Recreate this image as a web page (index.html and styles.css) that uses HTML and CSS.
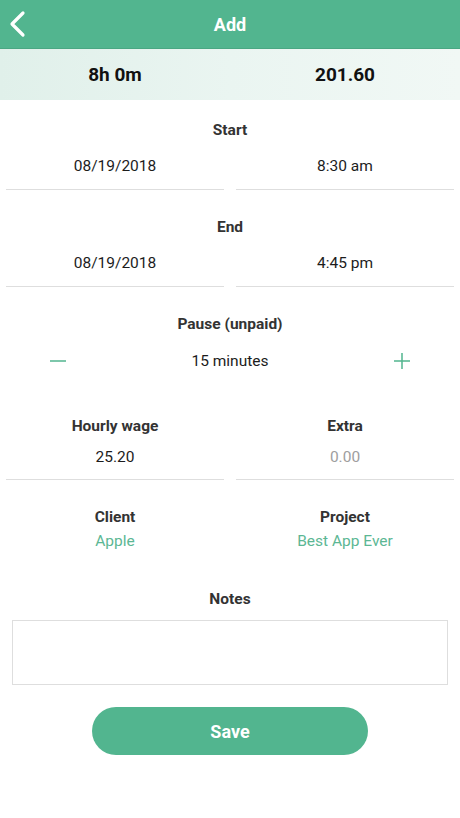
FILE: index.html
```
<!DOCTYPE html>
<html lang="en">
<head>
    <meta charset="UTF-8">
    <meta name="viewport" content="width=device-width, initial-scale=1.0">
    <title>Add</title>
    <link rel="stylesheet" href="styles.css">
</head>
<body>
    <div class="appbar">
        <span class="back">
            <svg width="18" height="28" viewBox="0 0 18 28"><path d="M15 3 L4 14 L15 25" fill="none" stroke="#fff" stroke-width="3.2" stroke-linecap="round" stroke-linejoin="round"/></svg>
        </span>
        <span class="appbar-title">Add</span>
    </div>
    <div class="summary">
        <div class="summary-value">8h 0m</div>
        <div class="summary-value">201.60</div>
    </div>

    <div class="form">
        <div class="section first">
            <div class="label">Start</div>
            <div class="pair">
                <div class="field">08/19/2018</div>
                <div class="field">8:30 am</div>
            </div>
        </div>
        <div class="section">
            <div class="label">End</div>
            <div class="pair">
                <div class="field">08/19/2018</div>
                <div class="field">4:45 pm</div>
            </div>
        </div>
        <div class="section">
            <div class="label">Pause (unpaid)</div>
            <div class="stepper">
                <span class="step">
                    <svg width="18" height="18" viewBox="0 0 18 18"><path d="M1 9 H17" stroke="#52b58f" stroke-width="1.5"/></svg>
                </span>
                <span class="step-value">15 minutes</span>
                <span class="step">
                    <svg width="18" height="18" viewBox="0 0 18 18"><path d="M1 9 H17 M9 1 V17" stroke="#52b58f" stroke-width="1.5"/></svg>
                </span>
            </div>
        </div>
        <div class="pair wage-row">
            <div>
                <div class="label small-gap">Hourly wage</div>
                <div class="field short">25.20</div>
            </div>
            <div>
                <div class="label small-gap">Extra</div>
                <div class="field short placeholder">0.00</div>
            </div>
        </div>
        <div class="pair client-row">
            <div>
                <div class="label tight">Client</div>
                <div class="link">Apple</div>
            </div>
            <div>
                <div class="label tight">Project</div>
                <div class="link">Best App Ever</div>
            </div>
        </div>
        <div class="notes">
            <div class="label notes-label">Notes</div>
            <div class="notes-box"></div>
        </div>
        <div class="actions">
            <button class="save">Save</button>
        </div>
    </div>
</body>
</html>
```

FILE: styles.css
```
:root {
    --green: #52b58f;
    --green-text: #5cb794;
    --text: #1c1c1c;
    --label: #333333;
    --line: #dedede;
}
body {
    margin: 0;
    font-family: Roboto, "Noto Sans", sans-serif;
    background: #ffffff;
    color: var(--text);
}
.appbar {
    height: 48px;
    background: var(--green);
    border-bottom: 1px solid #4aa783;
    display: flex;
    align-items: center;
    justify-content: center;
    position: relative;
}
.back {
    position: absolute;
    left: 8px;
    top: 10px;
    display: flex;
}
.appbar-title {
    color: #fff;
    font-weight: 700;
    font-size: 18px;
}
.summary {
    height: 51px;
    display: grid;
    grid-template-columns: 1fr 1fr;
    align-items: center;
    background: linear-gradient(90deg, #e0f0ea 0%, #eaf5f1 50%, #f1f8f5 100%);
}
.summary-value {
    text-align: center;
    font-size: 19px;
    font-weight: 700;
    color: #111;
}
.form {
    padding: 0 6px;
}
.section {
    margin-top: 27px;
}
.section.first {
    margin-top: 20px;
}
.label {
    text-align: center;
    font-size: 15.5px;
    line-height: 20px;
    font-weight: 700;
    color: var(--label);
    margin-bottom: 10px;
}
.label.small-gap {
    margin-bottom: 5px;
}
.label.tight {
    margin-bottom: 4px;
}
.pair {
    display: grid;
    grid-template-columns: 1fr 1fr;
    column-gap: 12px;
}
.field {
    text-align: center;
    font-size: 15.5px;
    line-height: 20px;
    padding: 6px 0 13px;
    border-bottom: 1px solid var(--line);
}
.field.short {
    padding-bottom: 12px;
}
.field.placeholder {
    color: #9e9e9e;
}
.stepper {
    display: flex;
    align-items: center;
    justify-content: space-between;
    padding: 7px 43px 0 43px;
}
.step {
    display: flex;
}
.step-value {
    font-size: 15.5px;
    line-height: 20px;
}
.wage-row {
    margin-top: 45px;
}
.client-row {
    margin-top: 27px;
}
.link {
    text-align: center;
    font-size: 15.5px;
    line-height: 20px;
    color: var(--green-text);
}
.notes {
    margin-top: 38px;
    padding: 0 6px;
}
.notes-label {
    margin-bottom: 11px;
}
.notes-box {
    height: 63px;
    border: 1px solid var(--line);
}
.actions {
    display: flex;
    justify-content: center;
    margin-top: 22px;
}
.save {
    width: 276px;
    height: 48px;
    border: none;
    border-radius: 24px;
    background: var(--green);
    color: #fff;
    font-family: Roboto, "Noto Sans", sans-serif;
    font-size: 18px;
    font-weight: 700;
}
```
